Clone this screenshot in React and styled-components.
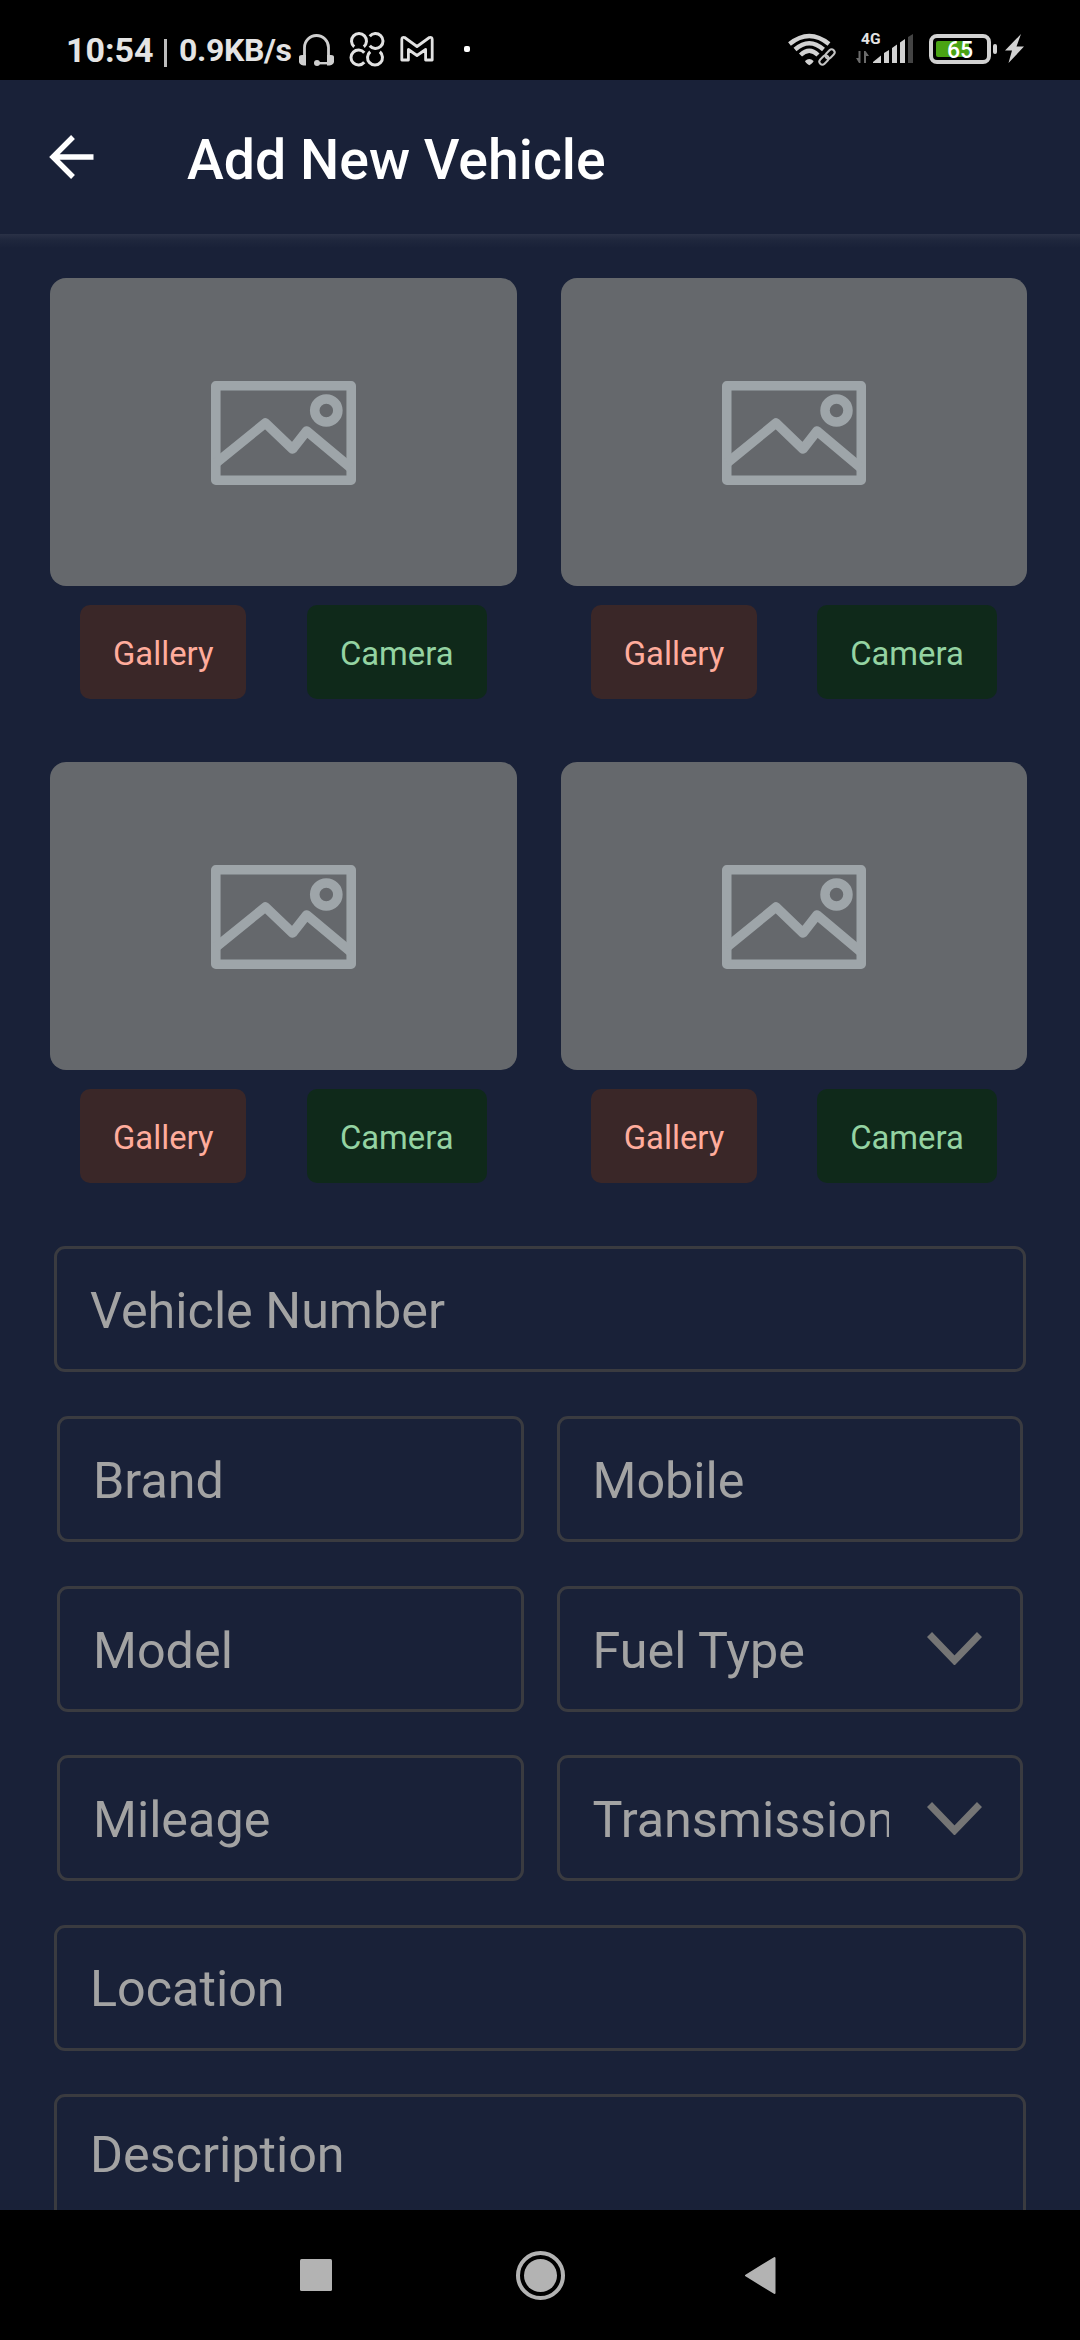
import React from 'react';
import styled, { createGlobalStyle } from 'styled-components';

const navy = '#192138';

const GlobalStyle = createGlobalStyle`
  * { box-sizing: border-box; }
  body { margin: 0; background: ${navy}; }
  button, input { font: inherit; color: inherit; }
`;

const Screen = styled.div`
  width: 1080px;
  height: 2340px;
  display: flex;
  flex-direction: column;
  overflow: hidden;
  background: ${navy};
  font-family: Roboto, 'Liberation Sans', sans-serif;
`;

const StatusBar = styled.div`
  height: 80px;
  flex: none;
  display: flex;
  align-items: center;
  padding: 20px 55px 0 66px;
  background: #000;
  color: #e4e4e4;
  svg { display: block; flex: none; }
`;

const Clock = styled.span`
  font-size: 34px;
  font-weight: 700;
  line-height: 40px;
  width: 88px;
  white-space: nowrap;
`;

const Divider = styled.span`
  width: 3px;
  height: 28px;
  margin: 6px 12px 0 10px;
  background: #bdbdbd;
`;

const Speed = styled.span`
  font-size: 32px;
  font-weight: 700;
  letter-spacing: -0.35px;
  line-height: 40px;
  width: 119px;
  white-space: nowrap;
`;

const Notifications = styled.div`
  display: flex;
  align-items: center;
  gap: 14px;
`;

const MoreDot = styled.span`
  width: 6px;
  height: 6px;
  margin: 0 0 2px 15px;
  border-radius: 2px;
  background: #fff;
`;

const SystemIcons = styled.div`
  display: flex;
  align-items: center;
  gap: 14px;
  margin-left: auto;
`;

const Header = styled.header`
  height: 154px;
  flex: none;
  display: flex;
  align-items: center;
  padding-left: 40px;
  gap: 83px;
`;

const BackButton = styled.button`
  width: 64px;
  height: 64px;
  padding: 0;
  border: 0;
  background: none;
  color: #fff;
  svg { display: block; }
`;

const Title = styled.h1`
  margin: 8px 0 0;
  font-size: 55.4px;
  font-weight: 500;
  line-height: 64px;
  color: #fff;
`;

const Content = styled.main`
  flex: 1;
  min-height: 0;
  overflow: hidden;
  background: linear-gradient(#2a3146 0, #1f273d 6px, ${navy} 14px);
`;

const PhotoGrid = styled.section`
  display: grid;
  grid-template-columns: 467px 466px;
  column-gap: 44px;
  row-gap: 63px;
  padding: 44px 0 0 50px;
`;

const Preview = styled.div`
  height: 308px;
  padding-top: 2px;
  border-radius: 16px;
  background: #65686c;
  display: flex;
  align-items: center;
  justify-content: center;
  svg { display: block; }
`;

const PhotoActions = styled.div`
  display: flex;
  justify-content: space-around;
  margin-top: 19px;
`;

const PhotoButton = styled.button`
  width: ${p => p.$width}px;
  height: 94px;
  padding: 3px 0 0;
  border: 0;
  border-radius: 10px;
  font-size: 32.8px;
  background: ${p => p.$bg};
  color: ${p => p.$fg};
`;

const Form = styled.form`
  display: flex;
  flex-direction: column;
  gap: 43.6px;
  padding: 63.4px 54px 0;
`;

const Row = styled.div`
  display: flex;
  gap: 33px;
  padding: 0 3px;
`;

const Field = styled.label`
  display: flex;
  align-items: ${p => (p.$multiline ? 'flex-start' : 'center')};
  min-width: 0;
  flex: ${p => (p.$multiline ? '0 0 300px' : '1 0 126px')};
  padding: ${p => (p.$multiline ? '28px' : '3px')} 33px 0;
  border: 3px solid #3a3b40;
  border-radius: 11px;

  ${Row} & {
    flex: 1 1 0;
    height: 126px;
    padding-top: 4px;
  }
`;

const Placeholder = styled.span`
  font-size: 50.3px;
  line-height: 60px;
  color: #a3a3a3;
  white-space: nowrap;
  overflow: hidden;
  flex: ${p => (p.$select ? '0 0 296px' : '1')};
`;

const Chevron = styled.svg`
  display: block;
  flex: none;
  margin: -4px 0 0 38px;
`;

const NavBar = styled.nav`
  height: 130px;
  flex: none;
  display: flex;
  align-items: center;
  padding-left: 291px;
  gap: 174px;
  background: #000;
  svg { display: block; }
`;

const HeadsetIcon = () => (
  <svg width="37" height="40" viewBox="298 30 37 40">
    <path d="M304.500 57V47.500a12 12 0 0 1 24 0V57" fill="none" stroke="#cfcfcf" strokeWidth="2.800" />
    <path d="M299 57q0-2 3-2h4v10.500h-2.500q-4.500-1-4.500-4zM334 57q0-2-3-2h-4v10.500h2.500q4.500-1 4.500-4z" fill="#cfcfcf" />
    <path d="M329 63.200H317" stroke="#cfcfcf" strokeWidth="2.400" />
    <circle cx="317" cy="63" r="3" fill="#cfcfcf" />
  </svg>
);

const CloverIcon = () => (
  <svg width="36" height="40" viewBox="349 30 36 40" fill="none" stroke="#e2e2e2" strokeWidth="3">
    <path d="M354.200 46.750A7.500 7.500 0 1 1 363.800 46.750" />
    <path d="M369.750 36.200A7.500 7.500 0 1 1 369.750 45.800" />
    <path d="M364.250 52.700A7.500 7.500 0 1 0 364.250 62.300" />
    <path d="M370.200 51.750A7.500 7.500 0 1 0 379.800 51.750" />
  </svg>
);

const MailIcon = () => (
  <svg width="36" height="40" viewBox="399 30 36 40" fill="none" stroke="#e2e2e2" strokeWidth="2.800" strokeLinejoin="round">
    <path d="M401.800 39.500q0-2.600 2.800-2L417 46.500l12.400-9q2.800-.6 2.800 2V60h-6.600V49.500L417 55.500l-8.600-6V60h-6.600z" />
  </svg>
);

const WifiIcon = () => (
  <svg width="54" height="40" viewBox="787 30 54 40">
    <g fill="none" stroke="#d2d2d2" strokeWidth="4.400">
      <path d="M789.500 44Q809.300 28 829 44" />
      <path d="M795 49.500Q809.300 37 823.500 49.500" />
      <path d="M800.500 55Q809.300 46.500 818 55" />
    </g>
    <path d="M805 61q4.300-4 8.600 0q0 1.500-4.300 4.200q-4.300-2.700-4.300-4.200z" fill="#d2d2d2" />
    <g transform="rotate(-45 827 57)" fill="none" stroke="#000" strokeWidth="5">
      <rect x="818" y="54" width="18" height="6" rx="3" />
    </g>
    <g transform="rotate(-45 827 57)" fill="none" stroke="#c4c4c4" strokeWidth="2">
      <rect x="817.500" y="54" width="10.500" height="6" rx="3" />
      <rect x="826" y="54" width="10.500" height="6" rx="3" />
    </g>
  </svg>
);

const SignalIcon = () => (
  <svg width="59" height="40" viewBox="855 30 59 40">
    <text x="861" y="44" fontSize="15.500" fontWeight="700" textLength="19.500" lengthAdjust="spacingAndGlyphs" fill="#e4e4e4">4G</text>
    <path d="M860.500 51v12h-1.500l-3-5h2.500v-7zM864 63V51h1.500l3.500 5h-3v7z" fill="#6b6b6b" />
    <path d="M873 63v-1l8-6.500V63zM884 63V53l5-3v13zM892 63V48l5-3.500V63zM900 63V42.500l5-3.500v24z" fill="#d2d2d2" />
    <path d="M908 63V37l5-3v29z" fill="#444" />
  </svg>
);

const BatteryIcon = () => (
  <svg width="97" height="40" viewBox="928 30 97 40">
    <rect x="931" y="36" width="58" height="26" rx="6" fill="none" stroke="#d2d2d2" strokeWidth="4" />
    <rect x="936" y="41" width="33" height="16" rx="2" fill="#4aa314" />
    <rect x="993" y="44" width="4" height="10" rx="2" fill="#d2d2d2" />
    <text x="960" y="58" textAnchor="middle" fontSize="23" fontWeight="500" fill="#fff">65</text>
    <path d="M1021 34L1005 50.500h7L1008.500 63L1024 46.500h-7.500z" fill="#d2d2d2" />
  </svg>
);

const ImageIcon = ({ width }) => (
  <svg width={width} height="104" viewBox="0 0 144 104" preserveAspectRatio="none" fill="none" stroke="#9ea5a9" strokeWidth="9.500" strokeLinejoin="round">
    <path d="M4.750 4.750h134.500v94.500H4.750z" />
    <path d="M5 82L54 42l27 26L95 50l44 37" />
    <circle cx="114.500" cy="29.500" r="11.500" />
  </svg>
);

const Photo = ({ iconWidth }) => (
  <div>
    <Preview><ImageIcon width={iconWidth} /></Preview>
    <PhotoActions>
      <PhotoButton type="button" $width={166} $bg="#3a2728" $fg="#ffac9c">Gallery</PhotoButton>
      <PhotoButton type="button" $width={180} $bg="#0f291a" $fg="#94d3a2">Camera</PhotoButton>
    </PhotoActions>
  </div>
);

const TextField = ({ label, multiline }) => (
  <Field $multiline={multiline}><Placeholder>{label}</Placeholder></Field>
);

const SelectField = ({ label }) => (
  <Field>
    <Placeholder $select>{label}</Placeholder>
    <Chevron width="55" height="33" viewBox="0 0 55 33">
      <path d="M2.500 2.500L27.500 28.500l25-26" fill="none" stroke="#757575" strokeWidth="7" />
    </Chevron>
  </Field>
);

export default function App() {
  return (
    <Screen>
      <GlobalStyle />
      <StatusBar>
        <Clock>10:54</Clock>
        <Divider />
        <Speed>0.9KB/s</Speed>
        <Notifications>
          <HeadsetIcon />
          <CloverIcon />
          <MailIcon />
          <MoreDot />
        </Notifications>
        <SystemIcons>
          <WifiIcon />
          <SignalIcon />
          <BatteryIcon />
        </SystemIcons>
      </StatusBar>
      <Header>
        <BackButton type="button" aria-label="Back">
          <svg width="64" height="64" viewBox="0 0 64 64" fill="none" stroke="#fff" strokeWidth="5.400">
            <path d="M53.500 32H13M33 12L13 32l20 20" />
          </svg>
        </BackButton>
        <Title>Add New Vehicle</Title>
      </Header>
      <Content>
        <PhotoGrid>
          {[145, 144, 145, 144].map((w, i) => <Photo key={i} iconWidth={w} />)}
        </PhotoGrid>
        <Form>
          <TextField label="Vehicle Number" />
          <Row><TextField label="Brand" /><TextField label="Mobile" /></Row>
          <Row><TextField label="Model" /><SelectField label="Fuel Type" /></Row>
          <Row><TextField label="Mileage" /><SelectField label="Transmission" /></Row>
          <TextField label="Location" />
          <TextField label="Description" multiline />
        </Form>
      </Content>
      <NavBar>
        <svg width="50" height="50" viewBox="0 0 50 50"><rect x="9" y="9" width="32" height="32" rx="1.500" fill="#b3b3b3" /></svg>
        <svg width="50" height="50" viewBox="0 0 50 50">
          <circle cx="25.500" cy="25.500" r="22.500" fill="none" stroke="#b3b3b3" strokeWidth="4" />
          <circle cx="25.500" cy="25.500" r="16.500" fill="#b3b3b3" />
        </svg>
        <svg width="50" height="50" viewBox="0 0 50 50"><path d="M7 25.500L35.500 8v35z" fill="#b3b3b3" stroke="#b3b3b3" strokeWidth="2" strokeLinejoin="round" /></svg>
      </NavBar>
    </Screen>
  );
}
